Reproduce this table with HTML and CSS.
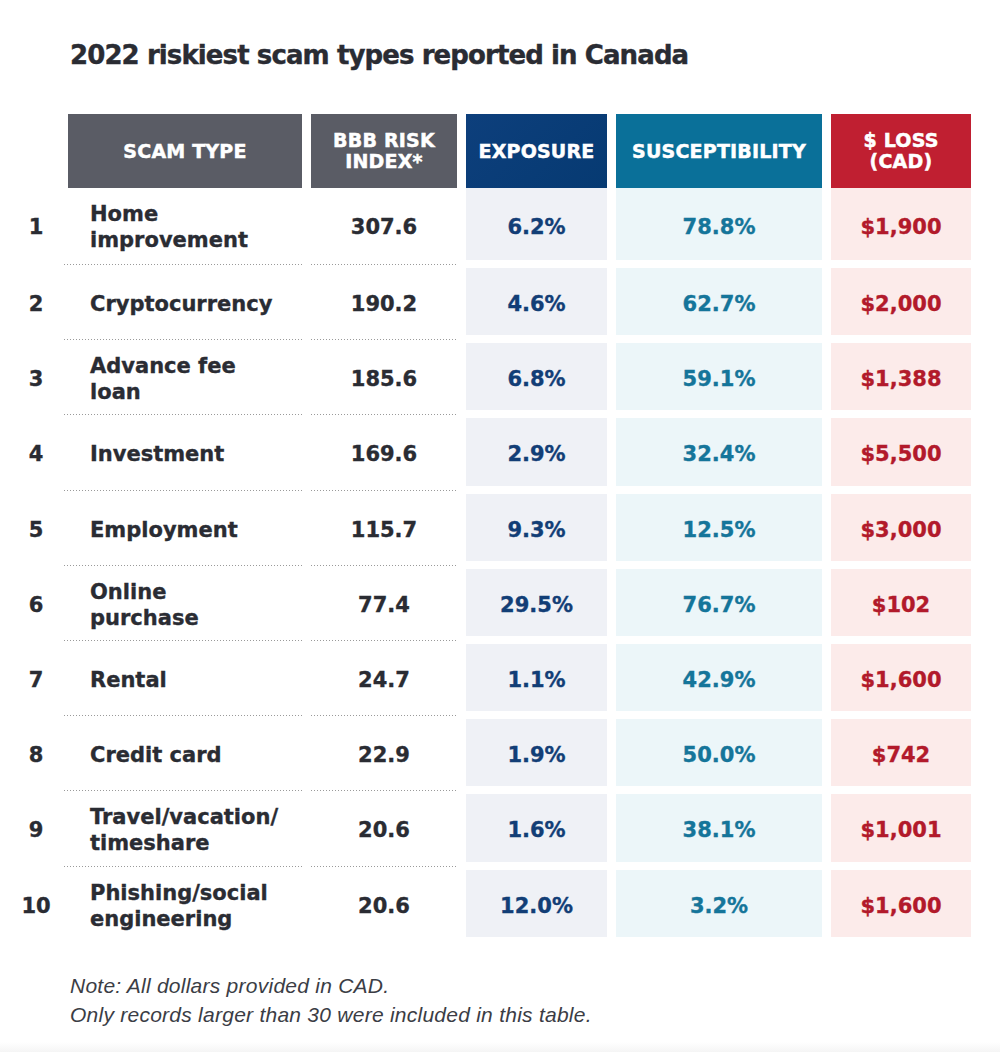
FILE: index.html
```html
<!DOCTYPE html>
<html lang="en">
<head>
<meta charset="utf-8">
<title>2022 riskiest scam types reported in Canada</title>
<link rel="stylesheet" href="styles.css">
</head>
<body>
<div class="page">
  <h1 class="title">2022 riskiest scam types reported in Canada</h1>

  <div class="table">
    <div class="hd hd-rank"></div>
    <div class="hd hd-grey hd-scam">SCAM TYPE</div>
    <div class="hd hd-grey">BBB RISK<br>INDEX*</div>
    <div class="hd hd-exp">EXPOSURE</div>
    <div class="hd hd-sus">SUSCEPTIBILITY</div>
    <div class="hd hd-loss">$ LOSS<br>(CAD)</div>

    <div class="c rank">1</div><div class="c name">Home<br>improvement</div><div class="c bbb">307.6</div><div class="c exp">6.2%</div><div class="c sus">78.8%</div><div class="c loss">$1,900</div>
    <div class="c rank">2</div><div class="c name">Cryptocurrency</div><div class="c bbb">190.2</div><div class="c exp">4.6%</div><div class="c sus">62.7%</div><div class="c loss">$2,000</div>
    <div class="c rank">3</div><div class="c name">Advance fee<br>loan</div><div class="c bbb">185.6</div><div class="c exp">6.8%</div><div class="c sus">59.1%</div><div class="c loss">$1,388</div>
    <div class="c rank">4</div><div class="c name">Investment</div><div class="c bbb">169.6</div><div class="c exp">2.9%</div><div class="c sus">32.4%</div><div class="c loss">$5,500</div>
    <div class="c rank">5</div><div class="c name">Employment</div><div class="c bbb">115.7</div><div class="c exp">9.3%</div><div class="c sus">12.5%</div><div class="c loss">$3,000</div>
    <div class="c rank">6</div><div class="c name">Online<br>purchase</div><div class="c bbb">77.4</div><div class="c exp">29.5%</div><div class="c sus">76.7%</div><div class="c loss">$102</div>
    <div class="c rank">7</div><div class="c name">Rental</div><div class="c bbb">24.7</div><div class="c exp">1.1%</div><div class="c sus">42.9%</div><div class="c loss">$1,600</div>
    <div class="c rank">8</div><div class="c name">Credit card</div><div class="c bbb">22.9</div><div class="c exp">1.9%</div><div class="c sus">50.0%</div><div class="c loss">$742</div>
    <div class="c rank">9</div><div class="c name">Travel/vacation/<br>timeshare</div><div class="c bbb">20.6</div><div class="c exp">1.6%</div><div class="c sus">38.1%</div><div class="c loss">$1,001</div>
    <div class="c rank last">10</div><div class="c name last">Phishing/social<br>engineering</div><div class="c bbb last">20.6</div><div class="c exp">12.0%</div><div class="c sus">3.2%</div><div class="c loss">$1,600</div>
  </div>

  <div class="note">
    <p>Note: All dollars provided in CAD.</p>
    <p>Only records larger than 30 were included in this table.</p>
  </div>
  <div class="foot"></div>
</div>
</body>
</html>
```

FILE: styles.css
```css
html, body {
  margin: 0;
  padding: 0;
  background: #ffffff;
}

.page {
  width: 1000px;
  height: 1052px;
  position: relative;
  overflow: hidden;
  font-family: "DejaVu Sans", "Liberation Sans", sans-serif;
  color: #2a2c33;
}

.title {
  margin: 40px 0 0 70px;
  font-size: 26px;
  line-height: 30px;
  font-weight: bold;
  letter-spacing: -0.9px;
  color: #2a2c33;
  -webkit-text-stroke: 0.4px #2a2c33;
}

.table {
  margin-top: 44px;
  display: grid;
  grid-template-columns: 55px 238px 146px 141px 206px 140px;
  grid-template-rows: 74px 80px repeat(9, 75.2px);
  column-gap: 9px;
}

.hd {
  display: flex;
  align-items: center;
  justify-content: center;
  text-align: center;
  color: #ffffff;
  font-weight: bold;
  font-size: 19px;
  line-height: 21px;
  letter-spacing: 0.2px;
  -webkit-text-stroke: 0.5px #ffffff;
}

.hd-rank {
  background: transparent;
}

.hd-grey {
  background: #5a5c65;
}

.hd-scam {
  margin-left: 4px;
}

.hd-exp {
  background: linear-gradient(135deg, #0d3f7c, #063a72);
}

.hd-sus {
  background: #0a7099;
}

.hd-loss {
  background: #c01f31;
}

.c {
  display: flex;
  align-items: center;
  justify-content: center;
  font-weight: bold;
  font-size: 21px;
  line-height: 26px;
  margin-bottom: 8px;
  padding-top: 5px;
  -webkit-text-stroke: 0.35px currentColor;
}

.rank,
.name,
.bbb {
  margin-bottom: 3px;
  padding-bottom: 5px;
  background-image: linear-gradient(to right, #9a9a9a 0 1px, transparent 1px);
  background-size: 3px 1px;
  background-repeat: repeat-x;
  background-position: left bottom;
  color: #2a2c33;
}

.rank {
  background-image: none;
  padding-left: 17px;
}

.name {
  justify-content: flex-start;
  padding-left: 26px;
}

.last {
  background-image: none;
}

.exp {
  background: #eff1f6;
  color: #123e76;
}

.sus {
  background: #ecf6f9;
  color: #15759a;
}

.loss {
  background: #fcebea;
  color: #b21a2b;
}

.note {
  margin: 26px 0 0 70px;
  font-family: "Liberation Sans", Arial, sans-serif;
  font-style: italic;
  font-size: 21px;
  line-height: 29px;
  letter-spacing: 0.25px;
  color: #3b3d45;
}

.note p {
  margin: 0;
}

.foot {
  position: absolute;
  left: 0;
  right: 0;
  bottom: 0;
  height: 10px;
  background: linear-gradient(to bottom, #ffffff, #f5f5f5);
}
```
